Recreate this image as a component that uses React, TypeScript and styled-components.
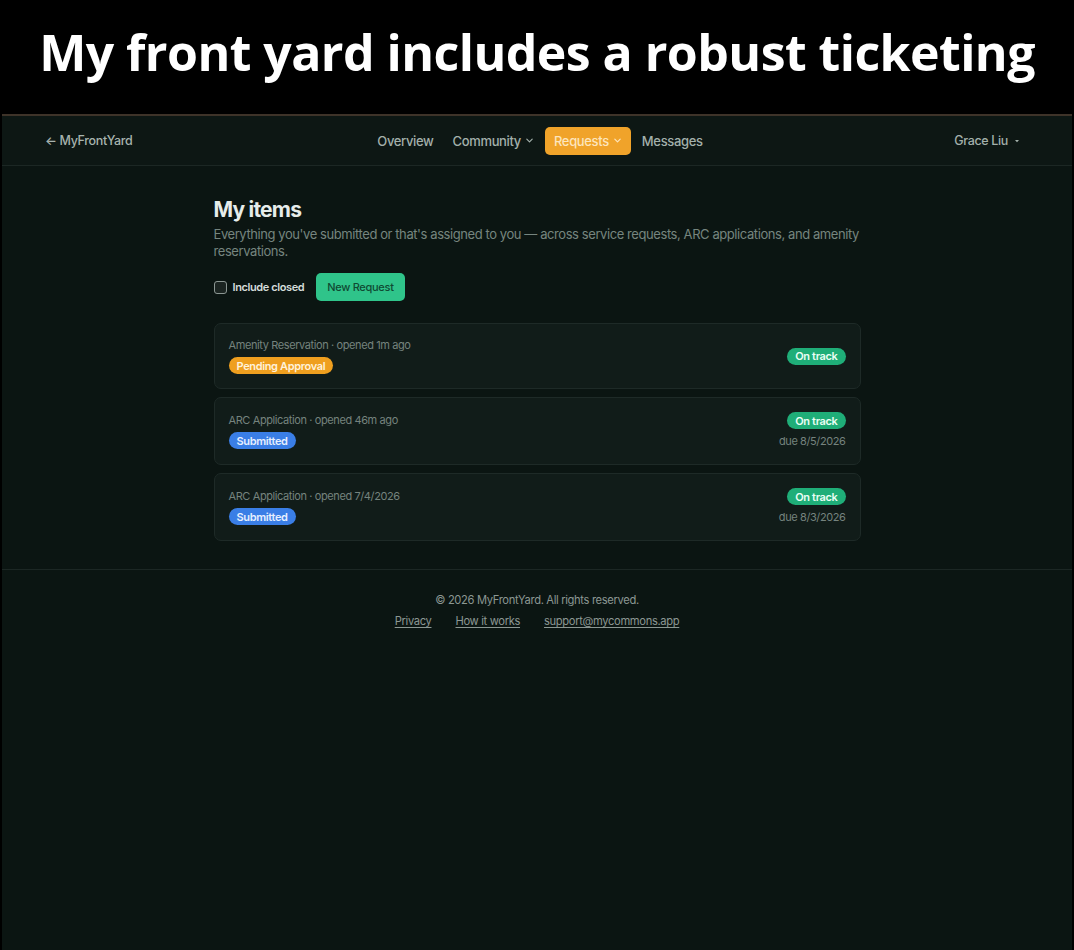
import React from "react";
import styled, { createGlobalStyle } from "styled-components";

const Global = createGlobalStyle`
  html, body { margin: 0; padding: 0; background: #000; }
  body { font-family: Inter, "Noto Sans", sans-serif; -webkit-font-smoothing: antialiased; }
  * { box-sizing: border-box; }
`;

const Page = styled.div`
  width: 1074px;
  height: 950px;
  background: #000;
  display: flex;
  flex-direction: column;
  overflow: hidden;
`;

const Caption = styled.div`
  height: 114px;
  display: flex;
  align-items: center;
  justify-content: center;
  padding-bottom: 10px;
  font-family: "Open Sans", sans-serif;
  font-weight: 700;
  font-size: 50px;
  letter-spacing: -0.55px;
  color: #fff;
`;

const Frame = styled.div`
  flex: 1;
  margin: 0 2px;
  border-top: 2px solid #3e3329;
  background: #0b1512;
  display: flex;
  flex-direction: column;
  letter-spacing: -0.35px;
`;

const Header = styled.header`
  height: 50px;
  display: grid;
  grid-template-columns: 1fr auto 1fr;
  align-items: center;
  padding: 0 43px;
  background: #0d1714;
  border-bottom: 1px solid #1c2724;
`;

const Brand = styled.a`
  font-size: 12.5px;
  color: #a7b3ae;
  font-weight: 500;
  text-decoration: none;
`;

const Nav = styled.nav`
  display: flex;
  align-items: center;
  gap: 11px;
  margin-left: 6px;
`;

const NavItem = styled.a<{ $active?: boolean; $lead?: boolean }>`
  display: inline-flex;
  align-items: center;
  gap: 4px;
  height: 28px;
  padding: 0 ${(p) => (p.$active ? "9px" : "0")};
  margin-right: ${(p) => (p.$lead ? "8px" : "0")};
  border-radius: 5px;
  font-size: 13px;
  font-weight: 500;
  color: ${(p) => (p.$active ? "#fde5bd" : "#a3b0ab")};
  background: ${(p) => (p.$active ? "#f0a32a" : "transparent")};
  text-decoration: none;
`;

const User = styled.div`
  justify-self: end;
  display: flex;
  align-items: center;
  gap: 6px;
  padding-right: 9px;
  font-size: 12.5px;
  font-weight: 500;
  color: #a3b0ab;
`;

const Main = styled.main`
  width: 647px;
  margin: 0 auto;
  padding: 31px 0 28px;
`;

const Title = styled.h1`
  margin: 0;
  font-size: 21px;
  font-weight: 700;
  letter-spacing: -0.8px;
  color: #e6ecea;
  line-height: 26px;
`;

const Lead = styled.p`
  margin: 3px 0 0;
  font-size: 13px;
  line-height: 17px;
  color: #76857f;
  letter-spacing: -0.42px;
`;

const Toolbar = styled.div`
  display: flex;
  align-items: center;
  gap: 12px;
  margin-top: 13px;
`;

const Check = styled.label`
  display: flex;
  align-items: center;
  gap: 6px;
  font-size: 11px;
  font-weight: 600;
  color: #d5dcda;
  letter-spacing: -0.4px;
`;

const Box = styled.span`
  width: 13px;
  height: 13px;
  border: 1.5px solid #8b9692;
  border-radius: 3px;
  background: #1b2421;
`;

const PrimaryButton = styled.button`
  height: 28px;
  padding: 0 11px;
  border: none;
  border-radius: 5px;
  background: #2fc48a;
  color: #0f4a33;
  font-family: inherit;
  font-size: 11px;
  font-weight: 500;
  letter-spacing: -0.3px;
`;

const List = styled.div`
  display: flex;
  flex-direction: column;
  gap: 8px;
  margin-top: 22px;
`;

const Card = styled.div`
  display: flex;
  align-items: center;
  justify-content: space-between;
  min-height: 66px;
  padding: 14px 14px;
  background: #111c19;
  border: 1px solid #1e2a27;
  border-radius: 7px;
`;

const Col = styled.div<{ $end?: boolean }>`
  display: flex;
  flex-direction: column;
  align-items: ${(p) => (p.$end ? "flex-end" : "flex-start")};
  gap: 4px;
`;

const Meta = styled.div`
  font-size: 11px;
  line-height: 15px;
  color: #75837e;
  letter-spacing: -0.4px;
`;

const Pill = styled.span<{ $tone: "amber" | "blue" | "green" }>`
  display: inline-flex;
  align-items: center;
  height: 17px;
  padding: 0 8px;
  border-radius: 9px;
  font-size: 11px;
  font-weight: 600;
  letter-spacing: -0.35px;
  color: ${(p) => (p.$tone === "amber" ? "#fff2da" : p.$tone === "blue" ? "#e6efff" : "#eafff5")};
  background: ${(p) =>
    p.$tone === "amber" ? "#ef9f1f" : p.$tone === "blue" ? "#3a7ee6" : "#1fae78"};
`;

const Due = styled.div`
  font-size: 11px;
  line-height: 17px;
  color: #75837e;
  letter-spacing: -0.4px;
`;

const Footer = styled.footer`
  border-top: 1px solid #1c2724;
  padding-top: 23px;
  display: flex;
  flex-direction: column;
  align-items: center;
  gap: 7px;
  font-size: 11.2px;
  color: #8b9793;
`;

const FooterLinks = styled.div`
  display: flex;
  gap: 24px;
`;

const FooterLink = styled.a`
  color: #8b9793;
  text-decoration: underline;
  text-underline-offset: 2px;
`;

const Chevron = () => (
  <svg width="9" height="9" viewBox="0 0 10 10" fill="none">
    <path d="M2 3.5 5 6.5 8 3.5" stroke="currentColor" strokeWidth="1.3" strokeLinecap="round" strokeLinejoin="round" />
  </svg>
);

const Caret = () => (
  <svg width="6" height="6" viewBox="0 0 6 6">
    <path d="M1 2h4L3 4.2z" fill="currentColor" />
  </svg>
);

type Item = {
  kind: string;
  opened: string;
  status: string;
  tone: "amber" | "blue";
  due?: string;
};

const items: Item[] = [
  { kind: "Amenity Reservation", opened: "opened 1m ago", status: "Pending Approval", tone: "amber" },
  { kind: "ARC Application", opened: "opened 46m ago", status: "Submitted", tone: "blue", due: "due 8/5/2026" },
  { kind: "ARC Application", opened: "opened 7/4/2026", status: "Submitted", tone: "blue", due: "due 8/3/2026" },
];

export default function App() {
  return (
    <Page>
      <Global />
      <Caption>My front yard includes a robust ticketing</Caption>
      <Frame>
        <Header>
          <Brand href="#">← MyFrontYard</Brand>
          <Nav>
            <NavItem href="#" $lead>
              Overview
            </NavItem>
            <NavItem href="#">
              Community <Chevron />
            </NavItem>
            <NavItem href="#" $active>
              Requests <Chevron />
            </NavItem>
            <NavItem href="#">Messages</NavItem>
          </Nav>
          <User>
            Grace Liu <Caret />
          </User>
        </Header>
        <Main>
          <Title>My items</Title>
          <Lead>
            Everything you've submitted or that's assigned to you — across service requests, ARC applications, and amenity
            reservations.
          </Lead>
          <Toolbar>
            <Check>
              <Box /> Include closed
            </Check>
            <PrimaryButton>New Request</PrimaryButton>
          </Toolbar>
          <List>
            {items.map((it, i) => (
              <Card key={i}>
                <Col>
                  <Meta>
                    {it.kind} · {it.opened}
                  </Meta>
                  <Pill $tone={it.tone}>{it.status}</Pill>
                </Col>
                <Col $end>
                  <Pill $tone="green">On track</Pill>
                  {it.due && <Due>{it.due}</Due>}
                </Col>
              </Card>
            ))}
          </List>
        </Main>
        <Footer>
          <div>© 2026 MyFrontYard. All rights reserved.</div>
          <FooterLinks>
            <FooterLink href="#">Privacy</FooterLink>
            <FooterLink href="#">How it works</FooterLink>
            <FooterLink href="#">support@mycommons.app</FooterLink>
          </FooterLinks>
        </Footer>
      </Frame>
    </Page>
  );
}
